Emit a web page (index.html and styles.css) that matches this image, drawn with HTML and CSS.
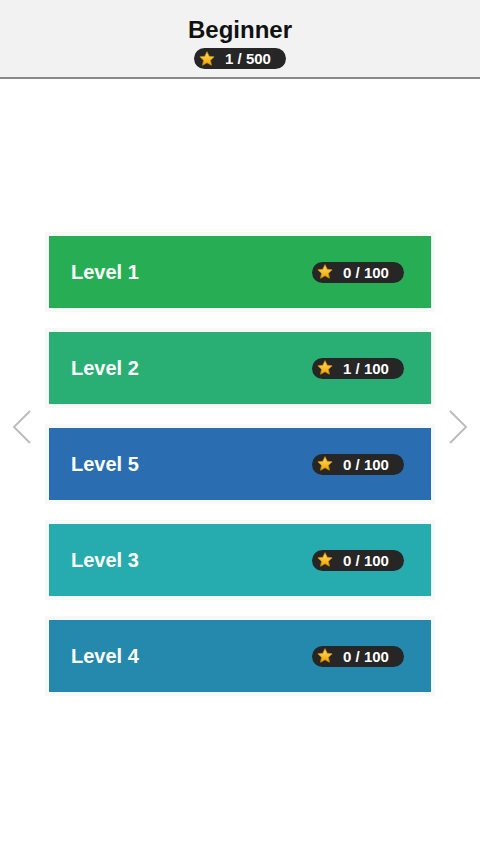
FILE: index.html
```html
<!DOCTYPE html>
<html lang="en">
<head>
    <meta charset="UTF-8">
    <meta name="viewport" content="width=device-width, initial-scale=1.0">
    <title>Beginner</title>
    <link rel="stylesheet" href="styles.css">
</head>
<body>
    <svg width="0" height="0" class="defs">
        <defs>
            <linearGradient id="gold" x1="0" y1="0" x2="0" y2="1">
                <stop offset="0" stop-color="#ffe066"/>
                <stop offset="1" stop-color="#f0a400"/>
            </linearGradient>
            <symbol id="star" viewBox="0 0 24 24">
                <path d="M12 2.2l2.9 6.1 6.6.8-4.9 4.6 1.3 6.6L12 17l-5.9 3.3 1.3-6.6-4.9-4.6 6.6-.8z" fill="url(#gold)" stroke="#d08a00" stroke-width="1" stroke-linejoin="round"/>
            </symbol>
        </defs>
    </svg>

    <header class="top">
        <h1>Beginner</h1>
        <div class="badge"><svg class="star"><use href="#star"/></svg><span>1 / 500</span></div>
    </header>

    <main class="levels">
        <div class="level lv-1"><span class="name">Level 1</span><div class="badge"><svg class="star"><use href="#star"/></svg><span>0 / 100</span></div></div>
        <div class="level lv-2"><span class="name">Level 2</span><div class="badge"><svg class="star"><use href="#star"/></svg><span>1 / 100</span></div></div>
        <div class="level lv-5"><span class="name">Level 5</span><div class="badge"><svg class="star"><use href="#star"/></svg><span>0 / 100</span></div></div>
        <div class="level lv-3"><span class="name">Level 3</span><div class="badge"><svg class="star"><use href="#star"/></svg><span>0 / 100</span></div></div>
        <div class="level lv-4"><span class="name">Level 4</span><div class="badge"><svg class="star"><use href="#star"/></svg><span>0 / 100</span></div></div>
    </main>

    <!-- arrows sit over the page -->
    <svg class="arrow arrow-left" viewBox="0 0 20 34"><path d="M18 1L2 17l16 16" fill="none" stroke="#bdbdbd" stroke-width="2"/></svg>
    <svg class="arrow arrow-right" viewBox="0 0 20 34"><path d="M2 1l16 16L2 33" fill="none" stroke="#bdbdbd" stroke-width="2"/></svg>
</body>
</html>
```
FILE: styles.css
```css
body { margin: 0; background: #fff; font-family: 'Liberation Sans', Arial, sans-serif; height: 853px; display: flex; flex-direction: column; }
.defs { position: absolute; }

.top { background: #f2f2f2; height: 77px; border-bottom: 2px solid #8a8a8a; display: flex; flex-direction: column; align-items: center; }
.top h1 { margin: 16px 0 0; font-size: 24px; line-height: 28px; color: #111; font-weight: bold; }
.top .badge { margin-top: 4px; }

.badge { background: #262626; border-radius: 11px; height: 21px; width: 92px; box-sizing: border-box; padding: 0 6px 0 4px; display: flex; align-items: center; color: #fff; font-weight: bold; font-size: 15px; }
.badge span { flex: 1; text-align: center; }
.star { width: 18px; height: 18px; }

.levels { flex: 1; display: flex; flex-direction: column; justify-content: center; align-items: center; gap: 24px; padding-bottom: 4px; }
.level { width: 382px; height: 72px; box-sizing: border-box; padding: 0 27px 0 22px; display: flex; align-items: center; justify-content: space-between; box-shadow: 0 0 0 4px #f7f8f8; }
.name { color: #fff; font-size: 20px; font-weight: bold; }
.lv-1 { background: #27ae55; }
.lv-2 { background: #29ae74; }
.lv-5 { background: #2a6db0; }
.lv-3 { background: #26abae; }
.lv-4 { background: #2589ad; }

.arrow { position: absolute; top: 410px; width: 20px; height: 34px; }
.arrow-left { left: 12px; }
.arrow-right { left: 448px; }
```
